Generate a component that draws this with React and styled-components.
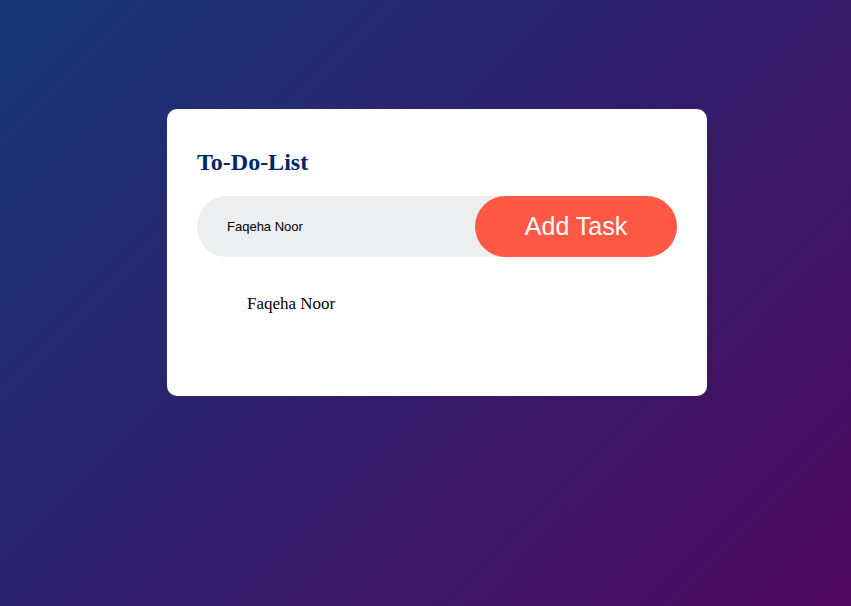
import React, { useState } from "react"
import styled, { createGlobalStyle } from "styled-components"

const GlobalStyle = createGlobalStyle`
  * {
    margin: 0;
    padding: 0;
    box-sizing: border-box;
  }
  body {
    font-family: "Liberation Serif", "Times New Roman", serif;
  }
`

const Page = styled.div`
  width: 100%;
  min-height: 100vh;
  background: linear-gradient(135deg, #153677, #4e085f);
  padding: 109px 0 20px 23px;
  display: flex;
  justify-content: center;
  align-items: flex-start;
`

const Card = styled.div`
  width: 540px;
  background: #fff;
  padding: 40px 30px 70px;
  border-radius: 10px;
`

const Title = styled.h2`
  color: #002765;
  font-family: "Liberation Serif", "Times New Roman", serif;
  font-size: 24px;
  font-weight: bold;
  line-height: 27px;
  margin-bottom: 20px;
`

const InputRow = styled.div`
  display: flex;
  align-items: center;
  justify-content: space-between;
  background: #edeef0;
  border-radius: 30px;
  padding-left: 20px;
  margin-bottom: 25px;
`

const TaskInput = styled.input`
  flex: 1;
  border: none;
  outline: none;
  background: transparent;
  padding: 10px;
  font-family: "Liberation Sans", Arial, sans-serif;
  font-size: 13px;
  color: #000;
`

const AddButton = styled.button`
  border: none;
  outline: none;
  width: 202px;
  height: 61px;
  background: #ff5945;
  color: #fff;
  font-family: "Liberation Sans", Arial, sans-serif;
  font-size: 25px;
  cursor: pointer;
  border-radius: 40px;
`

const TaskList = styled.ul`
  list-style: none;
`

const TaskItem = styled.li`
  font-size: 17px;
  line-height: 20px;
  padding: 12px 8px 12px 50px;
  user-select: none;
  cursor: pointer;
  color: #000;
`

export default function App() {
  const [text, setText] = useState("Faqeha Noor")
  const [tasks, setTasks] = useState(["Faqeha Noor"])

  const addTask = () => {
    if (!text.trim()) return
    setTasks([...tasks, text])
  }

  return (
    <>
      <GlobalStyle />
      <Page>
        <Card>
          <Title>To-Do-List</Title>
          <InputRow>
            <TaskInput
              type="text"
              value={text}
              onChange={(e) => setText(e.target.value)}
              placeholder="Add your text"
            />
            <AddButton onClick={addTask}>Add Task</AddButton>
          </InputRow>
          <TaskList>
            {tasks.map((t, i) => (
              <TaskItem key={i}>{t}</TaskItem>
            ))}
          </TaskList>
        </Card>
      </Page>
    </>
  )
}
